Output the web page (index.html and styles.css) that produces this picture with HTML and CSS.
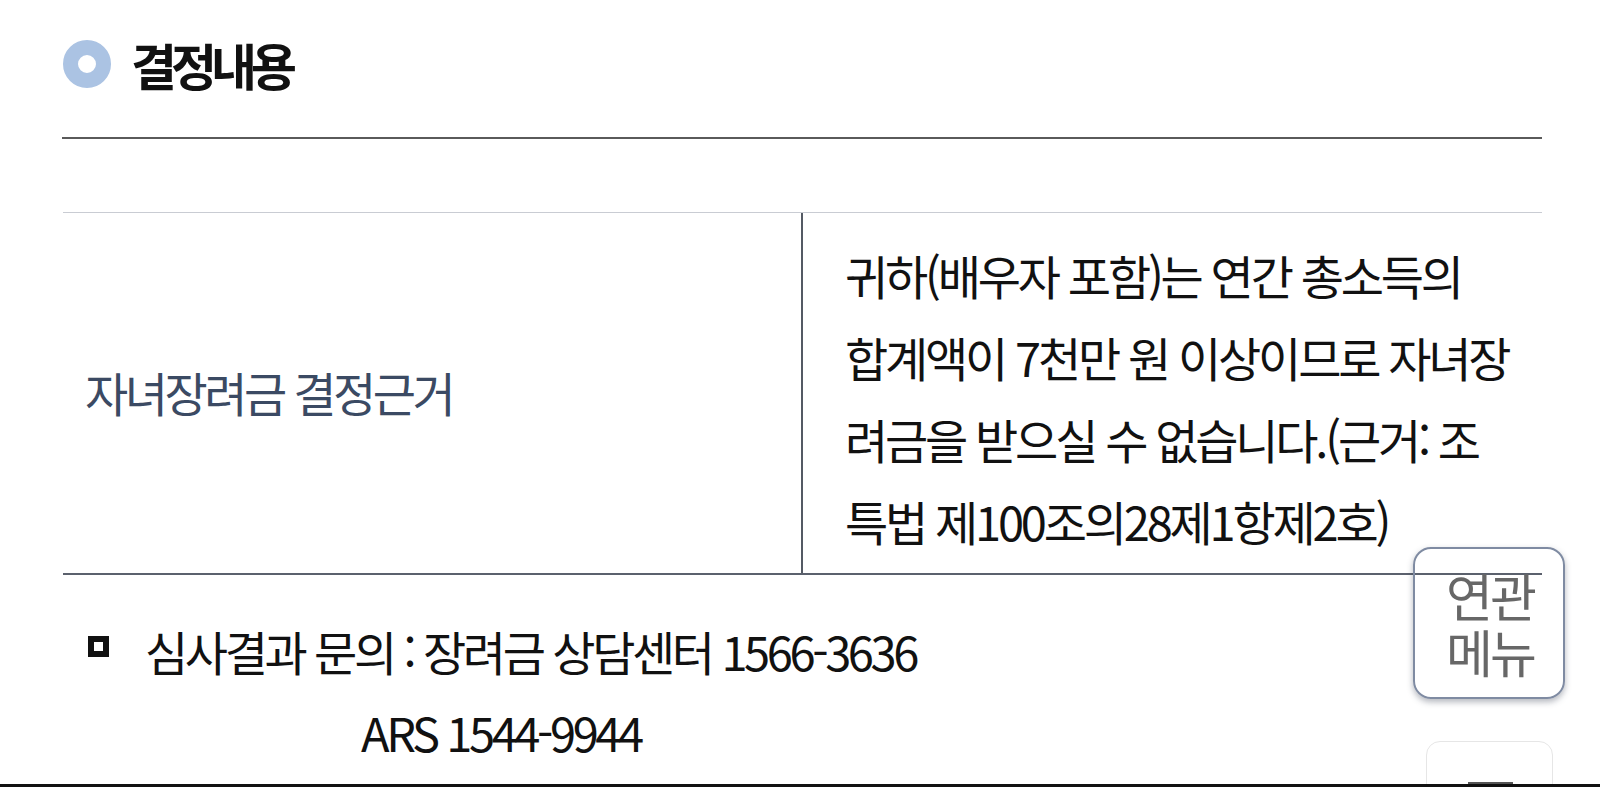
FILE: index.html
```html
<!DOCTYPE html>
<html lang="ko">
<head>
<meta charset="utf-8">
<title>결정내용</title>
<link rel="stylesheet" href="styles.css">
</head>
<body>
<main class="page">
  <header class="section-title">
    <span class="ring"></span>
    <h2 class="title-text">결정내용</h2>
  </header>
  <hr class="title-rule">

  <div class="result-table">
    <div class="cell-label">자녀장려금 결정근거</div>
    <div class="cell-value">
      <p class="value-text">귀하(배우자 포함)는 연간 총소득의<br>합계액이 7천만 원 이상이므로 자녀장<br>려금을 받으실 수 없습니다.(근거: 조<br>특법 제100조의28제1항제2호)</p>
    </div>
  </div>

  <div class="inquiry">
    <span class="bullet"></span>
    <div class="inquiry-text">
      <p class="inquiry-line">심사결과 문의 : 장려금 상담센터 1566-3636</p>
      <p class="inquiry-line ars">ARS 1544-9944</p>
    </div>
  </div>
</main>

<button class="related-menu" type="button">연관<br>메뉴</button>
<div class="top-button"><span class="top-bar"></span></div>
<div class="bottom-edge"></div>
</body>
</html>
```

FILE: styles.css
```css
* {
  box-sizing: border-box;
}

html, body {
  margin: 0;
  padding: 0;
  background: #ffffff;
  height: 787px;
  overflow: hidden;
}

body {
  font-family: "Noto Sans CJK KR", "Noto Sans", sans-serif;
  color: #111111;
}

.page {
  padding: 40px 58px 0 63px;
}

.section-title {
  display: flex;
  align-items: center;
  gap: 20px;
  height: 48px;
}

.ring {
  width: 48px;
  height: 48px;
  border-radius: 50%;
  border: 15px solid #abc3e3;
  flex: none;
}

.title-text {
  margin: 0;
  font-size: 50px;
  font-weight: 700;
  letter-spacing: -6px;
  line-height: 48px;
  color: #111111;
}

.title-rule {
  margin: 49px 0 0 -1px;
  border: 0;
  height: 2px;
  background: #5a5a5a;
}

.result-table {
  margin-top: 73px;
  display: grid;
  grid-template-columns: 738px 1fr;
  border-top: 1px solid #c9ccd3;
  border-bottom: 2px solid #5b616d;
  height: 363px;
}

.cell-label {
  display: flex;
  align-items: center;
  padding-left: 22px;
  padding-bottom: 4px;
  font-size: 47px;
  letter-spacing: -3.5px;
  color: #3b4a63;
}

.cell-value {
  border-left: 2px solid #545a64;
  padding: 21px 0 0 42px;
}

.value-text {
  margin: 0;
  font-size: 47px;
  letter-spacing: -3.2px;
  line-height: 82px;
  white-space: nowrap;
  color: #111111;
}

.inquiry {
  display: flex;
  align-items: flex-start;
  gap: 36px;
  padding: 35px 0 0 25px;
}

.bullet {
  width: 21px;
  height: 21px;
  border: 6px solid #111111;
  margin-top: 26px;
  flex: none;
}

.inquiry-line {
  margin: 0;
  font-size: 47px;
  letter-spacing: -3.4px;
  line-height: 81px;
  white-space: nowrap;
  color: #111111;
}

.ars {
  padding-left: 216px;
}

.related-menu {
  position: absolute;
  left: 1413px;
  top: 547px;
  width: 152px;
  height: 152px;
  border: 2px solid #7f8ba2;
  border-radius: 18px;
  background: transparent;
  box-shadow: 0 3px 6px rgba(40, 50, 70, 0.35);
  font-family: "Noto Sans CJK KR", "Noto Sans", sans-serif;
  font-size: 51px;
  letter-spacing: -3px;
  line-height: 56px;
  color: #676767;
  padding: 0 0 0 2px;
  text-align: center;
}

.top-button {
  position: absolute;
  left: 1426px;
  top: 741px;
  width: 127px;
  height: 80px;
  border: 1px solid #e6e6e6;
  border-radius: 14px;
  background: #ffffff;
}

.top-bar {
  position: absolute;
  left: 41px;
  top: 40px;
  width: 45px;
  height: 4px;
  background: #555555;
}

.bottom-edge {
  position: absolute;
  left: 0;
  right: 0;
  top: 784px;
  height: 3px;
  background: #111111;
}
```
